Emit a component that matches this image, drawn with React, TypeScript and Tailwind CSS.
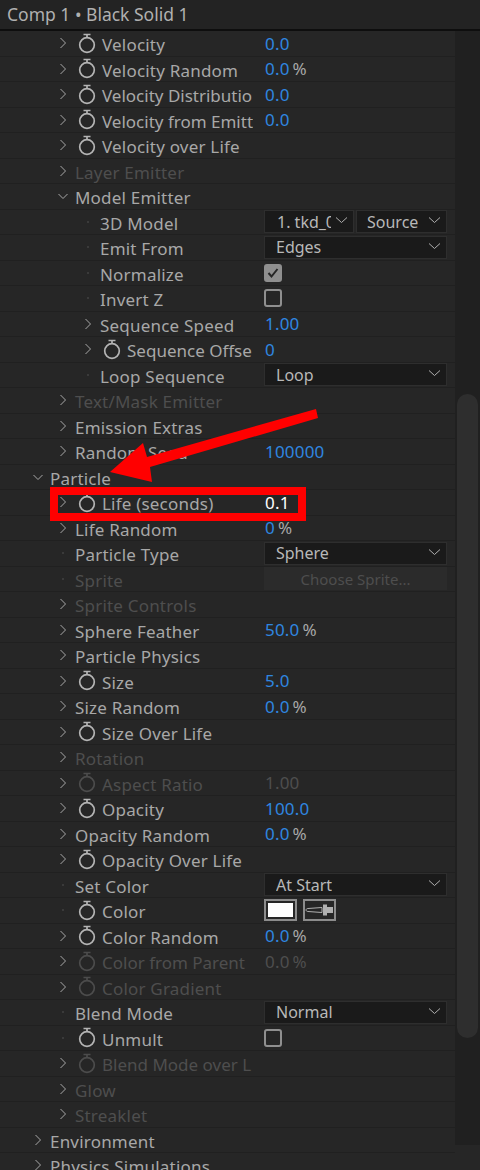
import { ReactNode } from "react";

type Level = 1 | 2 | 3;
type Lead = "closed" | "open" | "dot";

interface Row {
  label: string;
  level: Level;
  lead: Lead;
  watch?: boolean;
  dim?: boolean;
  tight?: boolean;
  value?: ReactNode;
}

const indent: Record<Level, string> = { 1: "pl-[31px]", 2: "pl-[56px]", 3: "pl-[81px]" };

function Chevron({ open }: { open?: boolean }) {
  return (
    <svg width="12" height="12" viewBox="0 0 12 12" fill="none" stroke="#a8a8a8" strokeWidth="1">
      {open ? <path d="M1.500 4l4.500 4.500L10.500 4" /> : <path d="M3.500 1L8.500 6l-5 5" />}
    </svg>
  );
}

function Stopwatch({ dim }: { dim?: boolean }) {
  return (
    <svg width="18" height="21" viewBox="0 0 18 21" fill="none" stroke={dim ? "#4c4c4c" : "#b4b4b4"} strokeWidth="1.700" className="shrink-0">
      <circle cx="9" cy="12" r="7.300" />
      <path d="M5.500 1.500h7M9 1.500v3" />
    </svg>
  );
}

function Num({ children, dim, white }: { children: ReactNode; dim?: boolean; white?: boolean }) {
  return <span className={dim ? "text-[#4e4e4e]" : white ? "text-white" : "text-[#2f86e0]"}>{children}</span>;
}

function Pct({ n, dim }: { n: string; dim?: boolean }) {
  return (
    <span className="flex gap-[3px]">
      <Num dim={dim}>{n}</Num>
      <span className={dim ? "text-[#4e4e4e]" : "text-[#a8a8a8]"}>%</span>
    </span>
  );
}

function Select({ text, className, clip }: { text: string; className: string; clip?: boolean }) {
  return (
    <div className={`flex h-[23px] items-center justify-between overflow-hidden border border-[#2e2e2e] bg-[#1a1a1a] pr-[5px] text-[16px] tracking-normal text-[#b8b8b8] ${className}`}>
      <span className={`overflow-hidden whitespace-nowrap ${clip ? "w-[54px]" : ""}`}>{text}</span>
      <svg width="13" height="8" viewBox="0 0 13 8" fill="none" stroke="#b0b0b0" strokeWidth="1" className="mb-[3px] shrink-0">
        <path d="M1 1.500l5.500 5 5.500-5" />
      </svg>
    </div>
  );
}

function Check({ on }: { on?: boolean }) {
  return (
    <div className={`-ml-px flex size-[18px] items-center justify-center rounded-[3px] border-2 border-[#8f8f8f] ${on ? "bg-[#8f8f8f]" : "bg-[#262626]"}`}>
      {on && (
        <svg width="12" height="12" viewBox="0 0 12 12" fill="none" stroke="#262626" strokeWidth="2">
          <path d="M1.500 6l3 3.500 6-7.500" />
        </svg>
      )}
    </div>
  );
}

function Swatch() {
  return (
    <div className="-ml-px flex gap-[6px]">
      <div className="h-[22px] w-[33px] border-2 border-[#8c8c8c] bg-[#262626] p-[2px]">
        <div className="h-full w-full bg-white" />
      </div>
      <div className="flex h-[22px] w-[33px] items-center justify-center border-2 border-[#8c8c8c] bg-[#262626]">
        <svg width="29" height="12" viewBox="0 0 29 12" fill="none">
          <path d="M1 6c0-1 1-1.500 2-1.500l14-1v5l-14-1c-1 0-2-.5-2-1.500z" stroke="#b0b0b0" strokeWidth="1" />
          <path d="M18 .5h4v2.500h6v6h-6v2.500h-4z" fill="#b0b0b0" />
        </svg>
      </div>
    </div>
  );
}

const rows: Row[] = [
  { label: "Velocity", level: 2, lead: "closed", watch: true, value: <Num>0.0</Num> },
  { label: "Velocity Random", level: 2, lead: "closed", watch: true, value: <Pct n="0.0" /> },
  { label: "Velocity Distributio", level: 2, lead: "closed", watch: true, tight: true, value: <Num>0.0</Num> },
  { label: "Velocity from Emitt", level: 2, lead: "closed", watch: true, tight: true, value: <Num>0.0</Num> },
  { label: "Velocity over Life", level: 2, lead: "closed", watch: true },
  { label: "Layer Emitter", level: 2, lead: "closed", dim: true },
  { label: "Model Emitter", level: 2, lead: "open" },
  {
    label: "3D Model",
    level: 3,
    lead: "dot",
    value: (
      <div className="-ml-px flex gap-[2px]">
        <Select text="1. tkd_0" className="w-[90px] pl-[12px]" clip />
        <Select text="Source" className="w-[91px] pl-[10px]" />
      </div>
    ),
  },
  { label: "Emit From", level: 3, lead: "dot", value: <Select text="Edges" className="-ml-px w-[183px] pl-[11px]" /> },
  { label: "Normalize", level: 3, lead: "dot", value: <Check on /> },
  { label: "Invert Z", level: 3, lead: "dot", value: <Check /> },
  { label: "Sequence Speed", level: 3, lead: "closed", value: <Num>1.00</Num> },
  { label: "Sequence Offse", level: 3, lead: "closed", watch: true, tight: true, value: <Num>0</Num> },
  { label: "Loop Sequence", level: 3, lead: "dot", value: <Select text="Loop" className="-ml-px w-[183px] pl-[11px]" /> },
  { label: "Text/Mask Emitter", level: 2, lead: "closed", dim: true },
  { label: "Emission Extras", level: 2, lead: "closed" },
  { label: "Random Seed", level: 2, lead: "closed", value: <Num>100000</Num> },
  { label: "Particle", level: 1, lead: "open" },
  { label: "Life (seconds)", level: 2, lead: "closed", watch: true, value: <Num white>0.1</Num> },
  { label: "Life Random", level: 2, lead: "closed", value: <Pct n="0" /> },
  { label: "Particle Type", level: 2, lead: "dot", value: <Select text="Sphere" className="-ml-px w-[183px] pl-[11px]" /> },
  {
    label: "Sprite",
    level: 2,
    lead: "dot",
    dim: true,
    value: <div className="-ml-px flex h-[23px] w-[183px] items-center justify-center bg-[#2b2b2b] text-[15px] tracking-normal text-[#4e4e4e]">Choose Sprite...</div>,
  },
  { label: "Sprite Controls", level: 2, lead: "closed", dim: true },
  { label: "Sphere Feather", level: 2, lead: "closed", value: <Pct n="50.0" /> },
  { label: "Particle Physics", level: 2, lead: "closed" },
  { label: "Size", level: 2, lead: "closed", watch: true, value: <Num>5.0</Num> },
  { label: "Size Random", level: 2, lead: "closed", value: <Pct n="0.0" /> },
  { label: "Size Over Life", level: 2, lead: "closed", watch: true },
  { label: "Rotation", level: 2, lead: "closed", dim: true },
  { label: "Aspect Ratio", level: 2, lead: "closed", watch: true, dim: true, value: <Num dim>1.00</Num> },
  { label: "Opacity", level: 2, lead: "closed", watch: true, value: <Num>100.0</Num> },
  { label: "Opacity Random", level: 2, lead: "closed", value: <Pct n="0.0" /> },
  { label: "Opacity Over Life", level: 2, lead: "closed", watch: true },
  { label: "Set Color", level: 2, lead: "dot", value: <Select text="At Start" className="-ml-px w-[183px] pl-[11px]" /> },
  { label: "Color", level: 2, lead: "dot", watch: true, value: <Swatch /> },
  { label: "Color Random", level: 2, lead: "closed", watch: true, value: <Pct n="0.0" /> },
  { label: "Color from Parent", level: 2, lead: "closed", watch: true, dim: true, tight: true, value: <Pct n="0.0" dim /> },
  { label: "Color Gradient", level: 2, lead: "closed", watch: true, dim: true },
  { label: "Blend Mode", level: 2, lead: "dot", value: <Select text="Normal" className="-ml-px w-[183px] pl-[11px]" /> },
  { label: "Unmult", level: 2, lead: "dot", watch: true, value: <Check /> },
  { label: "Blend Mode over L", level: 2, lead: "closed", watch: true, dim: true, tight: true },
  { label: "Glow", level: 2, lead: "closed", dim: true },
  { label: "Streaklet", level: 2, lead: "closed", dim: true },
  { label: "Environment", level: 1, lead: "closed" },
  { label: "Physics Simulations", level: 1, lead: "closed" },
];

function PropRow({ row }: { row: Row }) {
  return (
    <div className="flex h-[25.5px] shrink-0 items-center border-b border-[#202020]">
      <div className={`flex w-[253px] shrink-0 items-center overflow-hidden whitespace-nowrap ${indent[row.level]} ${row.dim ? "text-[#4e4e4e]" : "text-[#a8a8a8]"}`}>
        <span className="flex w-[13px] shrink-0 items-center justify-center">
          {row.lead === "dot" ? <span className="size-[2px] bg-[#3a3a3a]" /> : <Chevron open={row.lead === "open"} />}
        </span>
        {row.watch && (
          <span className="ml-[9px] mr-[6px] flex">
            <Stopwatch dim={row.dim} />
          </span>
        )}
        {!row.watch && <span className="ml-[6px]" />}
        <span className={`pt-[3px] ${row.tight ? "tracking-normal" : ""}`}>{row.label}</span>
      </div>
      <div className="ml-[12px] flex items-center">{row.value}</div>
    </div>
  );
}

export default function App() {
  return (
    <div className="relative flex h-[1170px] w-[480px] flex-col overflow-hidden bg-[#262626] text-[17px] tracking-[0.2px] [font-family:'Noto_Sans',sans-serif]">
      <div className="flex h-[31px] shrink-0 items-center border-b-2 border-[#0e0e0e] bg-[#232323] pb-[1px] pl-[7px] text-[17.5px] tracking-normal text-[#b0b0b0]">
        Comp 1 • Black Solid 1
      </div>
      <div className="flex min-h-0 flex-1">
        <div className="flex w-[455px] shrink-0 flex-col">
          {rows.map(r => <PropRow key={r.label} row={r} />)}
        </div>
        <div className="flex-1">
          <div className="h-[1114px] bg-[#202020] px-[2px] pt-[363px]">
            <div className="h-[644px] rounded-full bg-[#2e2e2e]" />
          </div>
        </div>
      </div>
      <div className="absolute top-[487px] left-[50px] h-[34px] w-[256px] border-[8px] border-[#ff0000]" />
      <svg className="absolute top-[400px] left-[100px]" width="225" height="90" viewBox="100 400 225 90" fill="#ff0000">
        <polygon points="316,409 318,418 150,467 152,482 110,472 143,443 147,457" />
      </svg>
    </div>
  );
}
